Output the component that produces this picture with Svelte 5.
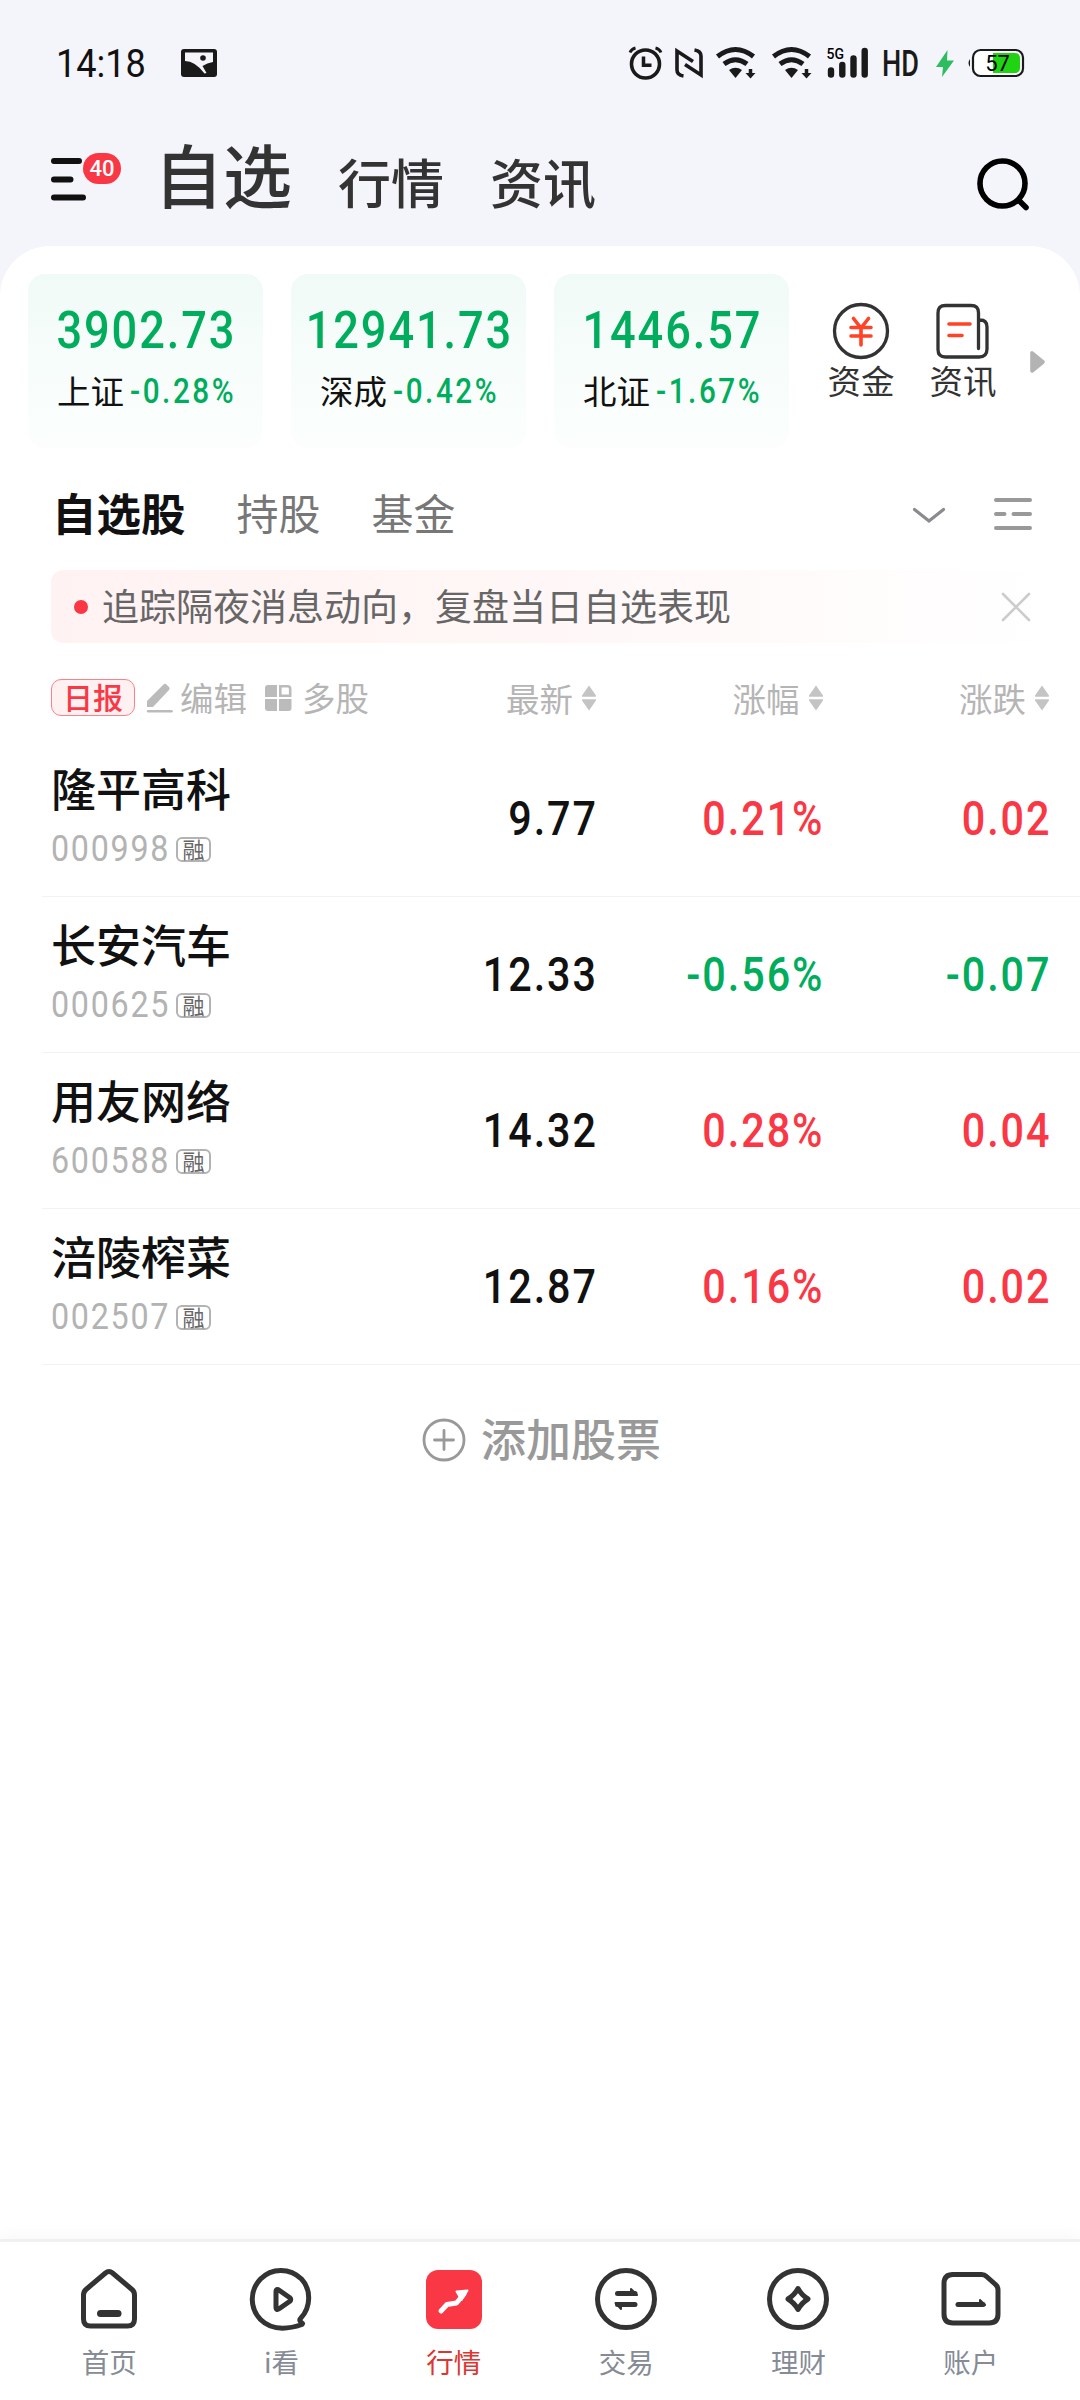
<script>
  const indices = [
    { name: '上证', value: '3902.73', change: '-0.28%' },
    { name: '深成', value: '12941.73', change: '-0.42%' },
    { name: '北证', value: '1446.57', change: '-1.67%' }
  ];

  const stocks = [
    { name: '隆平高科', code: '000998', price: '9.77', percent: '0.21%', change: '0.02' },
    { name: '长安汽车', code: '000625', price: '12.33', percent: '-0.56%', change: '-0.07' },
    { name: '用友网络', code: '600588', price: '14.32', percent: '0.28%', change: '0.04' },
    { name: '涪陵榨菜', code: '002507', price: '12.87', percent: '0.16%', change: '0.02' }
  ];

  const columns = ['最新', '涨幅', '涨跌'];
  const tabs = ['首页', 'i看', '行情', '交易', '理财', '账户'];

  let activeTab = $state('行情');
  let noticeOpen = $state(true);
</script>

{#snippet wifi()}
  <svg class="wifi" width="40" height="32" viewBox="0 0 40 32">
    <path d="M1.5 9.5Q19.500 -4.500 37.500 9.500" fill="none" stroke="#1a1a1a" stroke-width="5" />
    <path d="M8 17Q19.500 8.500 31 17" fill="none" stroke="#1a1a1a" stroke-width="5" />
    <path d="M13 23Q19.500 18.500 26 23L19.500 31Z" fill="#1a1a1a" />
    <path d="M34.500 22V29" fill="none" stroke="#1a1a1a" stroke-width="3.500" />
    <path d="M29.500 26H39.500L34.500 31.500Z" fill="#1a1a1a" />
  </svg>
{/snippet}

<div class="screen">
  <div class="status">
    <span class="status__time">14:18</span>
    <svg class="status__picture" width="36" height="28" viewBox="0 0 36 28">
      <rect width="36" height="28" rx="3" fill="#1a1a1a" />
      <path d="M4 3.500H32V13Q26 14 21.500 17L25.500 24L23.500 24.500Q14 12 4 12Z" fill="#f4f5fa" />
      <circle cx="22" cy="9" r="2.800" fill="#1a1a1a" />
    </svg>

    <div class="status__right">
      <svg width="33" height="34" viewBox="0 0 33 34">
        <circle cx="16.500" cy="18" r="14" fill="none" stroke="#1a1a1a" stroke-width="3.600" />
        <path d="M14.500 10.500V19.300H22.500" fill="none" stroke="#1a1a1a" stroke-width="3.500" />
        <path d="M1 6.500Q2.500 3 6.500 2M26.500 2Q30.500 3 32 6.500" fill="none" stroke="#1a1a1a" stroke-width="3" />
      </svg>
      <svg class="nfc" width="28" height="30" viewBox="0 0 28 30">
        <path d="M8.500 28Q2 27 2 22V3L18 13.500M19.500 2Q26 3 26 8V27L10 16.500" fill="none" stroke="#1a1a1a" stroke-width="3.600" />
      </svg>
      {@render wifi()}
      {@render wifi()}
      <svg class="signal" width="42" height="32" viewBox="0 0 42 32">
        <text x="-0.500" y="12" textLength="17.500" lengthAdjust="spacingAndGlyphs" class="signal__text">5G</text>
        <path d="M4 23.500V27.500M15.300 18V27.500M26.500 11.500V27.500M37.700 4V27.500" fill="none" stroke="#1a1a1a" stroke-width="6.400" stroke-linecap="round" />
      </svg>
      <svg class="hd" width="35" height="28" viewBox="0 0 35 28">
        <text x="-2" y="27" textLength="37" lengthAdjust="spacingAndGlyphs" class="hd__text">HD</text>
      </svg>
      <svg class="bolt" width="18" height="27" viewBox="0 0 18 27">
        <path d="M11.500 0L0 17H7L6 27L18 10.500H11Z" fill="#2dbd60" />
      </svg>
      <svg class="battery" width="57" height="28" viewBox="0 0 57 28">
        <path d="M3 10Q0 14 3 18Z" fill="#1a1a1a" />
        <rect x="6" y="1" width="50" height="26" rx="7.500" fill="#fff" stroke="#1a1a1a" stroke-width="2.200" />
        <path d="M26 4H47.500Q53 4 53 9.500V18.500Q53 24 47.500 24H26Z" fill="#20d313" />
        <text x="30.500" y="22" text-anchor="middle" class="battery__text">57</text>
      </svg>
    </div>
  </div>

  <header class="header">
    <div class="menu">
      <svg width="36" height="44" viewBox="0 0 36 44">
        <path d="M3 4H28M3 22.500H19.500M3 40.500H32" fill="none" stroke="#111" stroke-width="6" stroke-linecap="round" />
      </svg>
      <span class="menu__badge">40</span>
    </div>
    <span class="header__item header__item--active">自选</span>
    <span class="header__item">行情</span>
    <span class="header__item">资讯</span>
    <svg class="header__search" width="54" height="54" viewBox="0 0 54 54">
      <circle cx="26.500" cy="26.500" r="22.500" fill="none" stroke="#000" stroke-width="5.600" />
      <path d="M42.500 43L50 50.500" stroke="#000" stroke-width="5.600" stroke-linecap="round" />
    </svg>
  </header>

  <main class="panel">
    <section class="indices">
      {#each indices as index}
        <div class="index">
          <span class="num index__value">{index.value}</span>
          <span class="index__row">
            {index.name}<span class="num index__change">{index.change}</span>
          </span>
        </div>
      {/each}
      <div class="shortcut shortcut--first">
        <svg width="58" height="58" viewBox="0 0 58 58">
          <circle cx="29" cy="29" r="26.500" fill="none" stroke="#333" stroke-width="3.300" />
          <path d="M21.500 16.500L29 26L36.500 16.500M19 25.500H39M19 34H39M29 26V43" fill="none" stroke="#ff4326" stroke-width="3.600" stroke-linecap="round" stroke-linejoin="round" />
        </svg>
        <span>资金</span>
      </div>
      <div class="shortcut">
        <svg width="58" height="58" viewBox="0 0 58 58">
          <path d="M44.500 46.500V11Q44.500 3.500 37 3.500H11.500Q4 3.500 4 11V47.500Q4 55 11.500 55H45Q53 55 53 47V25Q53 18 46 18" fill="none" stroke="#333" stroke-width="3.300" stroke-linecap="round" />
          <path d="M15 22H36M15 33.500H28" fill="none" stroke="#ff4326" stroke-width="3.600" stroke-linecap="round" />
        </svg>
        <span>资讯</span>
      </div>
      <svg class="indices__more" width="15" height="22" viewBox="0 0 15 22">
        <path d="M2 2V20L13 11Z" fill="#b3b3b3" stroke="#b3b3b3" stroke-width="3.600" stroke-linejoin="round" />
      </svg>
    </section>

    <nav class="groups">
      <span class="groups__item groups__item--active">自选股</span>
      <span class="groups__item">持股</span>
      <span class="groups__item">基金</span>
      <svg class="groups__chevron" width="34" height="18" viewBox="0 0 34 18">
        <path d="M2.500 2.500L17 14L31.500 2.500" fill="none" stroke="#8a8a8f" stroke-width="3.200" stroke-linecap="round" />
      </svg>
      <svg width="38" height="34" viewBox="0 0 38 34">
        <path d="M2 3H36M2 17H10.500M19.500 17H36M2 31H36" fill="none" stroke="#999" stroke-width="4" stroke-linecap="round" />
      </svg>
    </nav>

    {#if noticeOpen}
      <div class="notice">
        <span class="notice__dot"></span>
        <span class="notice__text">追踪隔夜消息动向，复盘当日自选表现</span>
        <button class="notice__close" aria-label="close" onclick={() => (noticeOpen = false)}>
          <svg width="30" height="30" viewBox="0 0 30 30">
            <path d="M2 2L28 28M28 2L2 28" stroke="#ccc" stroke-width="2.600" stroke-linecap="round" />
          </svg>
        </button>
      </div>
    {/if}

    <div class="grid grid--head">
      <div class="tools">
        <span class="tools__daily">日报</span>
        <svg class="tools__pencil" width="26" height="30" viewBox="0 0 26 30">
          <path d="M0 24V18L16.500 1.500Q18 0 19.500 1.500L22 4Q23.500 5.500 22 7L6 24Z" fill="#bbb" />
          <path d="M1.200 28.200H24.500" stroke="#bbb" stroke-width="2.600" stroke-linecap="round" />
        </svg>
        <span>编辑</span>
        <svg class="tools__blocks" width="27" height="26" viewBox="0 0 27 26">
          <path d="M3 0H12V12H0V3Q0 0 3 0ZM0 14H12V26H3Q0 26 0 23ZM14 14H26.500V23Q26.500 26 23.500 26H14Z" fill="#bbb" />
          <path d="M15.300 1.300H22.500Q25.200 1.300 25.200 4V10.700H15.300Z" fill="none" stroke="#bbb" stroke-width="2.600" />
        </svg>
        <span>多股</span>
      </div>
      {#each columns as column}
        <div class="sort">
          {column}
          <svg width="16" height="26" viewBox="0 0 16 26">
            <path d="M8 0.500L15 10.500Q15.500 11.800 14 11.800H2Q0.500 11.800 1 10.500ZM8 25.500L15 15.500Q15.500 14.200 14 14.200H2Q0.500 14.200 1 15.500Z" fill="#c4c4c4" />
          </svg>
        </div>
      {/each}
    </div>

    {#each stocks as stock}
      <div class="grid stock" class:down={stock.change.startsWith('-')}>
        <div class="stock__title">
          <span class="stock__name">{stock.name}</span>
          <span class="stock__meta">
            <span class="num stock__code">{stock.code}</span>
            <span class="stock__tag">融</span>
          </span>
        </div>
        <span class="num stock__value">{stock.price}</span>
        <span class="num stock__value stock__value--move">{stock.percent}</span>
        <span class="num stock__value stock__value--move">{stock.change}</span>
      </div>
    {/each}

    <div class="add">
      <svg width="44" height="44" viewBox="0 0 44 44">
        <circle cx="22" cy="22" r="20" fill="none" stroke="#999" stroke-width="2.800" />
        <path d="M12.500 22H31.500M22 12.500V31.500" stroke="#999" stroke-width="2.800" stroke-linecap="round" />
      </svg>
      <span>添加股票</span>
    </div>
  </main>

  <nav class="tabbar">
    {#each tabs as tab, i}
      <button class="tab" class:active={activeTab === tab} onclick={() => (activeTab = tab)}>
        <svg width="64" height="64" viewBox="0 0 64 64" fill="none" stroke="#333" stroke-width="5" stroke-linecap="round" stroke-linejoin="round">
          {#if i === 0}
            <path d="M28.500 6Q32 3 35.500 6L55 22.500Q57.500 24.700 57.500 28V52Q57.500 59 50.500 59H13.500Q6.500 59 6.500 52V28Q6.500 24.700 9 22.500Z" />
            <path d="M23.500 46.500H41" stroke-width="7" />
          {:else if i === 1}
            <path d="M53 57.500C37 63 22 63 11.500 52.500C0.500 41 0.500 23.500 11.500 12C22.500 0.500 41 0.500 52.500 12C62 22 62.500 40 51.500 51.500Q49.500 53.500 53.500 56.500" />
            <path d="M27 25Q27 21 30.500 23.500L40.500 30.500Q43 32.500 40.500 34.500L30.500 41.500Q27 44 27 40Z" />
          {:else if i === 2}
            <rect x="4" y="3" width="56" height="59" rx="12" fill="#fa3845" stroke="none" />
            <path d="M19 44L25 37.500L34.500 36L42 27" stroke="#fff" stroke-width="5" />
            <path d="M34.500 24.500L45.500 23.500L39.500 33Z" fill="#fff" stroke="#fff" stroke-width="2" />
          {:else if i === 3}
            <circle cx="32" cy="32" r="28.500" />
            <path d="M23.500 26.500H41M23.500 37.500H41" />
            <path d="M37 22L43 28H37ZM27 42L21.500 36H27Z" fill="#333" stroke-width="2" />
          {:else if i === 4}
            <circle cx="32" cy="32" r="28.500" />
            <path d="M32 21.500Q35.500 28 42 32Q35.500 36 32 42.500Q28.500 36 22 32Q28.500 28 32 21.500Z" />
          {:else}
            <path d="M13 7.500H42.500Q45.500 7.500 47.500 9.500L56.500 17.500Q59 19.500 59 23V47Q59 56 50 56H14Q5 56 5 47V16.500Q5 7.500 14 7.500Z" />
            <path d="M19 37.500H44" />
            <path d="M41 33L46 38H41Z" fill="#333" stroke-width="2" />
          {/if}
        </svg>
        <span>{tab}</span>
      </button>
    {/each}
  </nav>
</div>

<style>
  :global(body) {
    background: #fff;
  }

  .screen {
    display: flex;
    flex-direction: column;
    width: 1080px;
    height: 2400px;
    overflow: hidden;
    background: #f4f5fa;
    color: #111;
    font-family: "Noto Sans CJK SC", sans-serif;
  }

  svg {
    display: block;
    flex: none;
    overflow: visible;
  }

  button {
    padding: 0;
    border: 0;
    background: none;
    font: inherit;
  }

  /* narrow figures */
  .num {
    font-family: Roboto, "Noto Sans CJK SC", sans-serif;
    transform: scaleX(0.86);
  }

  .status {
    display: flex;
    align-items: center;
    height: 126px;
    padding: 0 56px;
    box-sizing: border-box;
  }

  .status__time {
    width: 92px;
    padding-top: 2px;
    font-family: Roboto, sans-serif;
    font-size: 38px;
    line-height: 50px;
    transform: scaleX(0.95);
    transform-origin: left;
  }

  .status__picture {
    margin-left: 33px;
  }

  .status__right {
    display: flex;
    align-items: center;
    margin-left: auto;
  }

  .nfc { margin-left: 13px; }
  .wifi { margin-left: 13px; }
  .wifi + .wifi { margin-left: 16px; }
  .signal { margin-left: 15px; }
  .hd { margin-left: 15px; }
  .bolt { margin-left: 17px; }
  .battery { margin-left: 13px; }

  .signal__text {
    font: 500 15px Roboto, sans-serif;
  }

  .hd__text {
    font: 500 36px Roboto, sans-serif;
    fill: #1a1a1a;
  }

  .battery__text {
    font: 400 22px Roboto, sans-serif;
  }

  .header {
    display: flex;
    height: 120px;
    padding: 0 50px 0 51px;
    color: #333;
  }

  .menu {
    position: relative;
    width: 103px;
    padding-top: 31px;
  }

  .menu__badge {
    position: absolute;
    top: 27px;
    left: 32px;
    width: 38px;
    height: 31px;
    border-radius: 16px;
    background: #fa3845;
    color: #fff;
    font: 500 22px/32px Roboto, sans-serif;
    text-align: center;
  }

  .header__item {
    margin-right: 46px;
    padding-top: 28px;
    font-size: 53px;
    font-weight: 500;
    line-height: 54px;
  }

  .header__item--active {
    padding-top: 12px;
    font-size: 69px;
    line-height: 70px;
  }

  .header__search {
    margin: 31px 0 0 auto;
  }

  .panel {
    flex: 1;
    border-radius: 50px 50px 0 0;
    background: #fff;
  }

  .indices {
    display: flex;
    height: 202px;
    padding: 28px 28px 0;
    box-sizing: border-box;
  }

  .index {
    display: flex;
    flex-direction: column;
    align-items: center;
    width: 235px;
    height: 174px;
    margin-right: 28px;
    border-radius: 17px;
    background: linear-gradient(#f0faf6, #f7fdfb 50%, #fbfefd);
  }

  .index__value {
    margin-top: 28px;
    padding-left: 2px;
    color: #00ad5c;
    font-size: 52.500px;
    font-weight: 500;
    line-height: 56px;
    letter-spacing: 2.2px;
  }

  .index__row {
    display: flex;
    margin-top: 7px;
    font-size: 33.5px;
    line-height: 50px;
  }

  .index__change {
    width: 104px;
    margin-left: 6px;
    padding-top: 1px;
    color: #00ad5c;
    font-size: 34.500px;
    font-weight: 500;
    letter-spacing: 3px;
    transform-origin: left;
  }

  .shortcut {
    display: flex;
    flex-direction: column;
    align-items: center;
    width: 68px;
    margin: 28px 34px 0 0;
    color: #333;
    font-size: 33.500px;
    line-height: 40px;
  }

  .shortcut--first {
    margin-left: 10px;
  }

  .indices__more {
    margin: 77px 0 0 -1px;
  }

  .groups {
    display: flex;
    align-items: center;
    height: 122px;
    padding: 10px 48px 0 52px;
    box-sizing: border-box;
    color: #777;
    font-size: 42px;
  }

  .groups__item {
    margin-right: 51px;
    padding-bottom: 4px;
    line-height: 60px;
  }

  .groups__item--active {
    color: #111;
    font-size: 44.500px;
    font-weight: 700;
  }

  .groups__chevron {
    margin: 4px 48px 0 auto;
  }

  .notice {
    display: flex;
    align-items: center;
    width: 1009px;
    height: 73px;
    margin-left: 51px;
    padding: 0 29px 0 23px;
    box-sizing: border-box;
    border-radius: 12px;
    background: linear-gradient(90deg, #fff2f2, #fff7f7 50%, #fff);
  }

  .notice__dot {
    width: 14px;
    height: 14px;
    border-radius: 50%;
    background: #fa3845;
  }

  .notice__text {
    margin-left: 14px;
    padding-bottom: 3px;
    color: #666;
    font-size: 37px;
    line-height: 60px;
  }

  .notice__close {
    margin-left: auto;
  }

  .grid {
    display: grid;
    grid-template-columns: 406px 149px 226.500px 226.500px;
    margin-left: 42px;
    padding-right: 30px;
    box-sizing: border-box;
  }

  .grid--head {
    height: 98px;
    align-items: center;
    padding-top: 13px;
    padding-bottom: 2px;
    color: #b5b5b5;
    font-size: 33.500px;
    line-height: 44px;
  }

  .grid--head span {
    padding-bottom: 2px;
  }

  .tools {
    display: flex;
    align-items: center;
    padding-left: 9px;
  }

  .tools__daily {
    width: 84px;
    height: 37px;
    box-sizing: border-box;
    border: 1px solid #fd8088;
    border-radius: 10px;
    background: #fff0f2;
    color: #fa3845;
    font-size: 30px;
    font-weight: 500;
    line-height: 32px;
    text-align: center;
  }

  .tools__pencil {
    margin: 0 7px 0 12px;
  }

  .tools__blocks {
    margin: 0 10px 0 18px;
  }

  .sort {
    display: flex;
    align-items: center;
    justify-content: flex-end;
    gap: 8px;
  }

  .stock {
    height: 156px;
    border-bottom: 1px solid #f2f2f2;
    align-items: center;
  }

  .stock__title {
    display: flex;
    flex-direction: column;
    padding: 0 0 6px 9px;
  }

  .stock__name {
    font-size: 45px;
    font-weight: 500;
    line-height: 60px;
  }

  .stock__meta {
    display: flex;
    align-items: center;
    height: 52px;
    padding-top: 4px;
  }

  .stock__code {
    width: 123px;
    color: #b3b3b3;
    font-size: 37.500px;
    letter-spacing: 2px;
    transform-origin: left;
  }

  .stock__tag {
    width: 35px;
    height: 25px;
    margin: 3px 0 0 2px;
    box-sizing: border-box;
    border: 2px solid #b3b3b3;
    border-radius: 6px;
    color: #666;
    font-size: 22px;
    line-height: 19px;
    text-align: center;
  }

  .stock__value {
    margin-right: -1px;
    padding-top: 1px;
    font-size: 48px;
    font-weight: 500;
    line-height: 60px;
    letter-spacing: 2.300px;
    text-align: right;
    transform-origin: right;
  }

  .stock__value--move {
    color: #fa3845;
  }

  .down .stock__value--move {
    color: #00ad5c;
  }

  .add {
    display: flex;
    align-items: center;
    justify-content: center;
    gap: 15px;
    height: 150px;
    padding-left: 3px;
    color: #999;
    font-size: 45px;
    font-weight: 500;
  }

  .add span {
    padding-bottom: 5px;
  }

  .tabbar {
    display: flex;
    height: 161px;
    padding: 0 23px;
    box-sizing: border-box;
    border-top: 3px solid #f0f0f0;
    background: #fff;
    box-shadow: 0 -4px 16px rgba(0, 0, 0, 0.03);
    z-index: 1;
  }

  .tab {
    display: flex;
    flex: 1;
    flex-direction: column;
    align-items: center;
    padding-top: 25px;
    color: #868b96;
    font-size: 27.500px;
    line-height: 40px;
  }

  .tab span {
    margin-top: 10px;
  }

  .tab.active {
    color: #dd3530;
  }
</style>
